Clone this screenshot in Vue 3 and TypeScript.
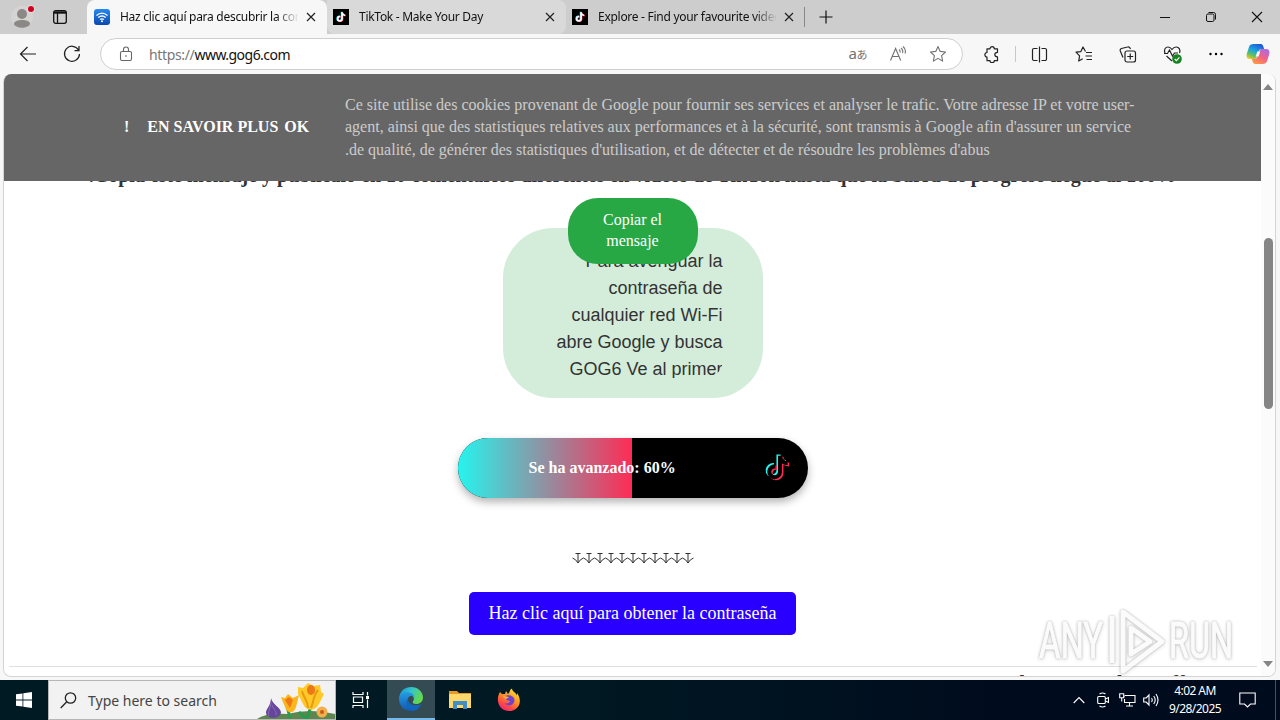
<script setup lang="ts">
interface Tab {
  title: string
  kind: 'wifi' | 'tiktok'
  state: string
}

const tabs: Tab[] = [
  { title: 'Haz clic aquí para descubrir la contraseña', kind: 'wifi', state: 'active' },
  { title: 'TikTok - Make Your Day', kind: 'tiktok', state: 'hovered' },
  { title: 'Explore - Find your favourite videos', kind: 'tiktok', state: 'plain' },
]

const note = 'M16.6 5.8A4.3 4.3 0 0 1 15.5 3h-3.1v12.4a2.6 2.6 0 1 1-1.9-2.5V9.7a5.7 5.7 0 1 0 5 5.7V9a7.300 7.300 0 0 0 4.300 1.400V7.300s-1.900.1-3.200-1.500z'
const messageLines = ['Para averiguar la', 'contraseña de', 'cualquier red Wi-Fi', 'abre Google y busca', 'GOG6 Ve al primer']
const progress = 60
const arrows = Array.from({ length: 11 }, (_, i) => i)
</script>

<template>
  <div class="desktop">
    <header class="titlebar">
      <div class="profile">
        <svg width="36" height="34" viewBox="0 0 36 34">
          <circle cx="22" cy="17" r="11" fill="#d6d4d2" />
          <circle cx="22" cy="14" r="5" fill="#8c8885" />
          <path d="M14 24c0-3 4-4 8-4s8 1 8 4c-2 5-14 5-16 0z" fill="#8c8885" />
          <circle cx="31" cy="9" r="4" fill="#ddd" />
          <circle cx="31" cy="9" r="3" fill="#d2001f" />
        </svg>
        <svg class="workspace" width="14" height="14" viewBox="0 0 14 14" fill="none" stroke="#111" stroke-width="1.300">
          <rect x=".7" y=".7" width="12.600" height="12.600" rx="2" />
          <path d="M1 2.500h12" stroke-width="2.400" />
          <path d="M4.500 3v10" />
        </svg>
      </div>
      <div v-for="tab in tabs" :key="tab.title" class="tab" :class="tab.state">
        <svg v-if="tab.kind === 'wifi'" width="16" height="16" viewBox="0 0 16 16">
          <defs><linearGradient id="wf" x2="0" y2="1"><stop stop-color="#258af0" /><stop offset="1" stop-color="#0b48ad" /></linearGradient></defs>
          <rect width="16" height="16" rx="3" fill="url(#wf)" />
          <g fill="none" stroke="#fff" stroke-width="1.300"><path d="M2.500 6.500q5.500-4.800 11 0M4.300 8.600q3.700-3.200 7.400 0M6.100 10.600q1.900-1.600 3.800 0" /></g>
          <circle cx="8" cy="12.200" r="1" fill="#fff" />
        </svg>
        <svg v-else width="16" height="16" viewBox="0 0 16 16">
          <rect width="16" height="16" fill="#000" />
          <g transform="translate(1.700 1.600) scale(.53)">
            <path :d="note" fill="#25f4ee" transform="translate(-1 -.6)" />
            <path :d="note" fill="#fe2c55" transform="translate(1 .6)" />
            <path :d="note" fill="#fff" />
          </g>
        </svg>
        <span class="tab-title">{{ tab.title }}</span>
        <svg class="close" width="10" height="10" viewBox="0 0 10 10"><path d="M1 1l8 8M9 1l-8 8" stroke="#222" stroke-width="1.200" /></svg>
      </div>
      <div class="new-tab">
        <svg width="14" height="14" viewBox="0 0 14 14"><path d="M7 .5v13M.5 7h13" stroke="#111" stroke-width="1.200" /></svg>
      </div>
      <div class="window-buttons">
        <svg width="12" height="12" viewBox="0 0 12 12"><path d="M1 6.500h10" stroke="#111" /></svg>
        <svg width="12" height="12" viewBox="0 0 12 12" fill="none" stroke="#111"><rect x="1.500" y="3" width="7.500" height="7.500" rx="1.500" /><path d="M3.500 1.500H8.500a2 2 0 0 1 2 2V8.500" /></svg>
        <svg width="12" height="12" viewBox="0 0 12 12"><path d="M1 1l10 10M11 1L1 11" stroke="#111" stroke-width="1.100" /></svg>
      </div>
    </header>

    <div class="toolbar">
      <svg class="back" width="18" height="16" viewBox="0 0 18 16" fill="none" stroke="#222" stroke-width="1.200"><path d="M8.500 1L1.500 8l7 7M1.500 8H17" /></svg>
      <svg class="reload" width="18" height="18" viewBox="0 0 18 18" fill="none" stroke="#222" stroke-width="1.250"><path d="M15.500 5A7.500 7.500 0 1 0 16.500 9M16 1v4.500h-4.500" /></svg>
      <div class="address">
        <svg class="lock" width="14" height="16" viewBox="0 0 14 16" fill="none" stroke="#666" stroke-width="1.100"><rect x="1.500" y="5.500" width="11" height="9" rx="1.500" /><path d="M4.500 5V3.500a2.500 2.500 0 0 1 5 0V5" /><circle cx="7" cy="10" r=".8" fill="#555" stroke="none" /></svg>
        <span class="url"><span class="scheme">https://</span>www.gog6.com</span>
        <span class="translate">a<span class="kana">あ</span></span>
        <svg class="read" width="18" height="18" viewBox="0 0 18 18" fill="none" stroke="#727272" stroke-width="1.100"><path d="M1.500 15.500L6.600 3.500l5.100 12M3.300 11.500h6.600M10 4.500q1.600 1.300 1 3M12 3q2.500 2 1.500 5M14 1.500q3.500 3 2 7" /></svg>
        <svg class="star" width="18" height="18" viewBox="0 0 18 18" fill="none" stroke="#727272" stroke-width="1.100" stroke-linejoin="round"><path d="M9 1.500l2.200 4.900 5.300.6-3.900 3.700 1 5.400L9 13.400l-4.600 2.700 1-5.400L1.500 7l5.300-.6z" /></svg>
      </div>
      <svg class="puzzle" width="16" height="17" viewBox="0 0 16 17" fill="none" stroke="#222" stroke-width="1.200" stroke-linejoin="round"><path d="M3 2.800h3C6 0 10.300 0 10.300 2.800h3.200v3.500c-3.600 0-3.600 4.600 0 4.600v3.800h-3.200c0 2.600-4.300 2.600-4.300 0H3v-3.700C.2 11 .2 6.500 3 6.500z" /></svg>
      <span class="divider"></span>
      <svg class="split" width="17" height="17" viewBox="0 0 17 17" fill="none" stroke="#222" stroke-width="1.200"><path d="M6.500 2.500H3a1.500 1.500 0 0 0-1.500 1.500v9A1.500 1.500 0 0 0 3 14.500h3.500M10.500 2.500H14a1.500 1.500 0 0 1 1.500 1.500v9a1.500 1.500 0 0 1-1.500 1.500h-3.500M8.500.5v16" /></svg>
      <svg class="favorites" width="18" height="17" viewBox="0 0 18 17" fill="none" stroke="#222" stroke-width="1.200" stroke-linejoin="round"><path d="M10.500 5.500L8 1 5.900 5.600 1 6.200l3.600 3.600L3.700 15l4-2.200M11 6.500h6M10.500 10h6.500M11.500 13.500h5.500" /></svg>
      <svg class="collections" width="18" height="17" viewBox="0 0 18 17" fill="none" stroke="#222" stroke-width="1.200"><path d="M4 11.500L1.300 5A2 2 0 0 1 2.500 2.500L8.500 1a2 2 0 0 1 2.500 1l.5 1" /><rect x="6" y="5" width="10.500" height="11" rx="2" /><path d="M11.250 7.500v6M8.250 10.500h6" /></svg>
      <svg class="health" width="20" height="19" viewBox="0 0 20 19" fill="none" stroke="#222" stroke-width="1.150"><path d="M2 8C.5 4.500 2.500 2 5 2c2 0 3 1 4 2.500C10 3 11.200 2 13.200 2c3 0 4.500 3 3.300 6M1 8.500h3.500l2-3.500 3 6 2-3h3.500M3.500 11L9 16" /><circle cx="14" cy="14" r="4.800" fill="#168321" stroke="none" /><path d="M11.700 14l1.700 1.700 3-3.300" stroke="#fff" /></svg>
      <svg class="more" width="14" height="4" viewBox="0 0 14 4"><circle cx="1.500" cy="2" r="1.200" /><circle cx="7" cy="2" r="1.200" /><circle cx="12.500" cy="2" r="1.200" /></svg>
      <svg class="copilot" width="24" height="22" viewBox="0 0 24 22">
        <defs>
          <linearGradient id="cpa" x1=".7" y1="0" x2=".2" y2="1"><stop stop-color="#2057d8" /><stop offset=".45" stop-color="#18a5e0" /><stop offset=".75" stop-color="#65c05e" /><stop offset="1" stop-color="#f0ca20" /></linearGradient>
          <linearGradient id="cpb" x1=".8" y1="0" x2=".2" y2="1"><stop stop-color="#a96be8" /><stop offset=".5" stop-color="#f26287" /><stop offset="1" stop-color="#ff9a3d" /></linearGradient>
        </defs>
        <path d="M7.500 1h7.300c1.700 0 2.200 1.400 2.700 3l.6 2h-2.300c-2 0-2.800 1-3.300 2.800L10.700 14c-.5 1.500-1.300 2-3 2H4C.8 16-.2 13.700 1 10l2-6c.8-2.200 2-3 4.500-3z" fill="url(#cpa)" />
        <path d="M16.500 21H9.200c-1.700 0-2.200-1.400-2.700-3L6 16h2.200c2 0 2.800-1 3.300-2.800L13.300 8c.5-1.500 1.300-2 3-2H20c3.200 0 4.200 2.300 3 6l-2 6c-.8 2.200-2 3-4.500 3z" fill="url(#cpb)" />
        <path d="M11.300 8.500h3l-1.700 5h-3z" fill="#fff" opacity=".9" />
      </svg>
    </div>

    <div class="page-frame">
      <main class="page">
        <section class="cookie-banner">
          <div class="cookie-actions"><span>!</span><span class="learn">EN SAVOIR PLUS</span><span class="ok">OK</span></div>
          <p class="cookie-text">
            <span>Ce site utilise des cookies provenant de Google pour fournir ses services et analyser le trafic. Votre adresse IP et votre user-</span>
            <span>agent, ainsi que des statistiques relatives aux performances et à la sécurité, sont transmis à Google afin d'assurer un service</span>
            <span>.de qualité, de générer des statistiques d'utilisation, et de détecter et de résoudre les problèmes d'abus</span>
          </p>
        </section>
        <h2 class="instruction">.Copia este mensaje y publícalo en 10 comentarios diferentes en videos de TikTok hasta que la barra de progreso llegue al 100%</h2>
        <section class="message">
          <button class="copy">Copiar el<br />mensaje</button>
          <div class="message-text"><div v-for="line in messageLines" :key="line">{{ line }}</div></div>
        </section>
        <section class="progress">
          <div class="progress-fill"></div>
          <span class="progress-label">Se ha avanzado: {{ progress }}%</span>
          <svg class="progress-logo" width="30" height="32" viewBox="0 0 30 32">
            <g transform="translate(0 -1) scale(1.300)">
              <path :d="note" fill="#25f4ee" transform="translate(-1.300 -.4)" />
              <path :d="note" fill="#fe2c55" transform="translate(1 1.500)" />
              <path :d="note" fill="#000" transform="translate(-.1 .6)" />
            </g>
          </svg>
        </section>
        <svg class="arrows" width="122" height="13" viewBox="0 0 122 13" fill="none" stroke="#333">
          <path v-for="i in arrows" :key="i" :d="`M${i * 11 + 3.500} 1.500h5M${i * 11 + 6} 1.500v9.500M${i * 11 + 0.500} 6q3.500 1.200 5.500 5q2-3.800 5.500-5`" />
        </svg>
        <button class="get-password">Haz clic aquí para obtener la contraseña</button>
        <hr />
        <h3 class="next-heading">Google ver Google en off</h3>
      </main>
      <div class="scrollbar">
        <svg width="10" height="6" viewBox="0 0 10 6"><path d="M0 6l5-6 5 6z" fill="#858585" /></svg>
        <i class="thumb"></i>
        <svg width="10" height="6" viewBox="0 0 10 6"><path d="M0 0l5 6 5-6z" fill="#858585" /></svg>
      </div>
    </div>

    <svg class="watermark" width="210" height="72" viewBox="0 0 210 72">
      <g class="mark-text">
        <text x="8" y="53" textLength="64" lengthAdjust="spacingAndGlyphs">ANY</text>
        <text x="138" y="53" textLength="64" lengthAdjust="spacingAndGlyphs">RUN</text>
      </g>
      <g class="mark-shape">
        <path d="M92 66V7l39 29.500z" /><path d="M100 49V23l19 13.500z" /><path d="M81 11v47" />
      </g>
    </svg>

    <footer class="taskbar">
      <div class="start">
        <svg width="16" height="16" viewBox="0 0 16 16" fill="#fff"><path d="M0 2.300L6.500 1.400v6.200H0zM7.300 1.300L16 0v7.600H7.300zM0 8.400h6.500v6.200L0 13.700zM7.300 8.400H16V16l-8.700-1.300z" /></svg>
      </div>
      <div class="search">
        <svg class="lens" width="17" height="17" viewBox="0 0 17 17" fill="none" stroke="#222" stroke-width="1.300"><circle cx="10.500" cy="6" r="5.200" /><path d="M6.800 9.800L.7 16" /></svg>
        <span>Type here to search</span>
        <svg class="flowers" width="78" height="38" viewBox="0 0 78 38">
          <path d="M0 38q8-6 30-5q24-6 48 0v5z" fill="#5d874e" />
          <path d="M33 37L30 25M50 38l4-13M49 38l-7-7" stroke="#2c9a4c" stroke-width="3" fill="none" />
          <path d="M14 17c1 6 9 9 10 14c0 7-14 8-15 1c0-5 5-7 5-15z" fill="#65469a" />
          <path d="M14 20c0 7-4 11-2 15M15 24c2 5 5 6 4 10" stroke="#8c6dbb" fill="none" />
          <path d="M24 16l4 1 3-4 5 4 6-3-3 12c-2 7-9 7-11 0z" fill="#fbb51e" />
          <path d="M28 19l4-3 4 3-3 8z" fill="#ef7816" />
          <path d="M41 6l5 1 5-5 5 3 7-1 1 7 3 2-5 10c-4 8-13 7-16 0l-5-10z" fill="#ffc928" />
          <path d="M45 10c2 8 6 9 6 17M61 9c-5 6-4 11-7 18" stroke="#e99a12" stroke-width="2" fill="none" />
          <ellipse cx="54" cy="9" rx="4" ry="5" fill="#ee7716" />
          <circle cx="65" cy="31" r="5.500" fill="#f3ae4d" /><circle cx="65" cy="31" r="2" fill="#c85b17" />
        </svg>
      </div>
      <div class="task">
        <svg width="18" height="16" viewBox="0 0 18 16" fill="none" stroke="#fff" stroke-width="1.200"><path d="M1 0v2.500h10V0M1 16v-2.500h10V16M1.500 5h9v5.500h-9zM15.500 0v3.500M15.500 7.500V16" /><path d="M14 4h3v3h-3z" fill="#fff" stroke="none" /></svg>
      </div>
      <div class="task open">
        <svg width="26" height="26" viewBox="0 0 26 26">
          <defs>
            <linearGradient id="eg" x2="1" y2=".4"><stop stop-color="#168fd5" /><stop offset=".5" stop-color="#35c4cb" /><stop offset="1" stop-color="#62d94e" /></linearGradient>
            <linearGradient id="eb" x2="0" y2="1"><stop stop-color="#259de5" /><stop offset="1" stop-color="#1258ae" /></linearGradient>
          </defs>
          <path d="M1.300 11C2.500 4.500 7 1 13 1c7 0 12 5 12 10.500c0 4-3 6.500-6.800 6.500c-3.200 0-4.200-1.300-3.200-2.700c2.500-3.500-.5-6.300-4-6.300C6 9 1 12 1.300 11z" fill="url(#eg)" />
          <path d="M1 13c0-4 3.500-7 8-7c4 0 7 2.500 7.500 5c-2-2-5.500-2-6.500 1.500c-1 5 5 9 13 6C20.500 23 17 25 13 25C6 25 1 20 1 13z" fill="url(#eb)" />
          <path d="M10 12.500c-4 4-1 11 5 12.300c4-.6 6.600-3 8-6.300c-7 3-14-1-13-6z" fill="#1067bd" />
        </svg>
      </div>
      <div class="task">
        <svg width="22" height="20" viewBox="0 0 22 20"><path d="M0 1h8l2 2h12v4H0z" fill="#e49b25" /><path d="M0 4h22v14H0z" fill="#ffd76b" /><path d="M4 19V11h14v8h-4v-4H8v4z" fill="#3e8fc9" /></svg>
      </div>
      <div class="task">
        <svg width="24" height="24" viewBox="0 0 24 24">
          <defs><linearGradient id="ff" x1=".8" y1="0" x2=".2" y2="1"><stop stop-color="#ffe52e" /><stop offset=".4" stop-color="#ff9a24" /><stop offset=".75" stop-color="#ff4549" /><stop offset="1" stop-color="#e9217c" /></linearGradient></defs>
          <path d="M3 4l2 2c1 0 2-.2 3 0L9 3l2 3c2-1 1-4 4-5.500c0 3 4 4 5 7V5c6 8 2 18-8 18C2 23-2 12 3 4z" fill="url(#ff)" />
          <path d="M7 9c3-3 10-2 10.500 3c0 6-8 7-10 3c2 1 5 0 5.500-2c-1.500 0-4-.5-6-4z" fill="#7142ca" /><path d="M6 8c2 0 4 0 6 1.500c-1 1-3 .5-3 2.500z" fill="#ffae2b" />
        </svg>
      </div>
      <div class="tray">
        <svg class="chev" width="12" height="8" viewBox="0 0 12 8"><path d="M.7 7L6 1.500 11.300 7" /></svg>
        <svg class="meet" width="12" height="16" viewBox="0 0 12 16"><rect x=".7" y="4.500" width="7.600" height="7" rx="1" /><path d="M8.500 7l3-1.500v5L8.500 9M2.500 2q3-2 6 0M2.500 14q3 2 6 0" /></svg>
        <svg class="net" width="17" height="14" viewBox="0 0 17 14"><path d="M6 2.500h10v7H5.500V6M10.500 9.500V13M7 13h7M.7.700h4v4h-4zM2.700 5v3.500M5 3h1" /></svg>
        <svg class="sound" width="17" height="14" viewBox="0 0 17 14"><path d="M.7 5h2.500L6 2v10L3.200 9H.7zM8.500 5q1.500 2 0 4M10.700 3q3 4 0 8M13 1q4 6 0 12" /></svg>
        <div class="clock"><span>4:02 AM</span><span>9/28/2025</span></div>
        <svg class="notice" width="17" height="16" viewBox="0 0 17 16"><path d="M.8 1h15.400v11H11.500L8.500 15 5.500 12H.8z" /></svg>
        <i class="peek"></i>
      </div>
    </footer>
  </div>
</template>

<style>
body { margin: 0; overflow: hidden; }
</style>

<style scoped>
* { box-sizing: border-box; }
svg { display: block; flex: none; }
button { border: 0; padding: 0; }
.desktop { position: relative; width: 1280px; height: 720px; overflow: hidden; display: flex; flex-direction: column; background: #f7f7f7; font-family: "Noto Sans", "Open Sans", sans-serif; }
.titlebar { height: 34px; flex: none; display: flex; background: #cdcdcd; }
.profile { width: 87px; display: flex; }
.workspace { margin: 10px 0 0 17px; }
.tab { width: 239px; height: 34px; padding: 0 11px 0 7px; display: flex; align-items: center; font-size: 12px; color: #111; white-space: nowrap; border-radius: 8px 8px 0 0; }
.tab.active { width: 240px; background: #f7f7f7; }
.tab.hovered { background: #d9d9d9; padding-left: 6px; border-radius: 0 8px 8px 8px; }
.tab.plain { padding-left: 6px; }
.tab-title { width: 178px; margin: -1px 0 0 10px; overflow: hidden; letter-spacing: -.28px; -webkit-mask-image: linear-gradient(90deg, #000 156px, transparent 179px); mask-image: linear-gradient(90deg, #000 156px, transparent 179px); }
.close { margin-left: auto; }
.new-tab { align-self: center; height: 20px; margin-left: -1px; padding: 3px 0 0 14px; border-left: 1px solid #888; }
.window-buttons { margin-left: auto; padding-right: 17px; display: flex; align-items: center; gap: 34px; }
.toolbar { height: 40px; flex: none; display: flex; align-items: center; background: #f7f7f7; }
.back { margin-left: 19px; }
.reload { margin-left: 26px; }
.address { width: 863px; height: 32px; margin-left: 19px; display: flex; align-items: center; border: 1px solid #cfcfcf; border-radius: 16px; background: #fff; }
.lock { margin-left: 18px; }
.url { margin-left: 16px; font-size: 14px; color: #111; letter-spacing: -.53px; }
.scheme { color: #777; letter-spacing: -.35px; }
.translate { margin-left: auto; display: flex; align-items: center; color: #727272; font-size: 15px; line-height: 20px; letter-spacing: -.5px; margin-top: -2px; }
.kana { margin-top: 1px; font-family: "Noto Sans CJK JP", sans-serif; font-size: 11px; }
.read { margin-left: 22px; }
.star { margin: 0 15px 0 22px; }
.puzzle { margin-left: 21px; }
.divider { width: 1px; height: 16px; margin-left: 15px; background: #c8c8c8; }
.split { margin-left: 15px; }
.favorites { margin-left: 27px; }
.collections { margin-left: 26px; }
.health { margin-left: 26px; }
.more { margin-left: 26px; }
.copilot { margin-left: 23px; }
.page-frame { width: 1273px; height: 603px; flex: none; margin-left: 3px; display: flex; overflow: hidden; border: 1px solid #d4d4d4; border-top: 0; border-radius: 8px; background: #fff; }
.page { position: relative; width: 1257px; flex: none; display: flex; flex-direction: column; align-items: center; color: #333; font-family: "Liberation Serif", serif; }
.cookie-banner { position: absolute; inset: 0 0 auto; z-index: 3; height: 107px; display: flex; padding: 20px 0 0 120px; background: #666; color: #ccc; font-size: 16px; }
.cookie-actions { width: 221px; display: flex; padding-top: 24px; line-height: 18px; color: #fff; font-weight: 700; white-space: nowrap; }
.learn { margin-left: 18px; }
.ok { margin-left: 6px; }
.cookie-text { margin: 0; display: flex; flex-direction: column; line-height: 22.400px; white-space: nowrap; }
.instruction { height: 30px; margin: 86px 0 0; flex: none; line-height: 30px; font-size: 20px; white-space: nowrap; }
.message { position: relative; width: 260px; height: 170px; flex: none; margin-top: 38px; border-radius: 50px; background: #d4edda; }
.copy { position: absolute; left: 65px; top: -30px; z-index: 1; width: 130px; height: 66px; padding-bottom: 2px; border-radius: 30px; color: #fff; background: #28a745; font: 16px/21px "Liberation Serif", serif; }
.message-text { height: 150px; margin-right: 40px; padding-top: 20px; overflow: hidden; border-radius: 0 0 18px 0; text-align: right; font: 18px/27px "Liberation Sans", sans-serif; }
.progress { position: relative; width: 350px; height: 60px; margin-top: 40px; flex: none; border-radius: 30px; overflow: hidden; display: flex; align-items: center; background: #000; box-shadow: 0 4px 8px rgba(0,0,0,.3); }
.progress-fill { width: 174px; height: 60px; background: linear-gradient(90deg, #25f4ee, #fe2c55); }
.progress-label { position: absolute; left: 71px; top: 20px; line-height: 20px; color: #fff; font-size: 16px; font-weight: 700; white-space: nowrap; }
.progress-logo { margin-left: 130px; }
.arrows { flex: none; margin-top: 54px; }
.get-password { width: 327px; height: 43px; flex: none; margin-top: 27px; border-radius: 5px; background: #2900ff; color: #fff; font: 18px "Liberation Serif", serif; white-space: nowrap; }
hr { width: 1248px; margin: 31px 0 0; border: 0; border-top: 1px solid #e0e0e0; flex: none; }
.next-heading { width: 287px; align-self: flex-end; flex: none; margin: 4px 0 0; font-size: 20px; line-height: 24px; white-space: nowrap; }
.scrollbar { width: 15px; padding: 10px 0 9px; display: flex; flex-direction: column; align-items: center; background: #fbfbfb; }
.thumb { width: 9px; height: 171px; margin: 148px 0 auto; flex: none; border-radius: 5px; background: #858585; }
.watermark { position: absolute; left: 1031px; top: 605px; z-index: 4; filter: drop-shadow(0 0 1px rgba(0,0,0,.4)) drop-shadow(0 1px 2px rgba(0,0,0,.2)); opacity: .65; }
.mark-text { font: 50px Roboto, sans-serif; fill: #fafafa; stroke: #fafafa; }
.mark-shape { fill: none; stroke: #fafafa; stroke-width: 5; stroke-linejoin: round; }
.taskbar { height: 40px; flex: none; margin-top: auto; display: flex; background: linear-gradient(90deg, #001a24 0, #001923 45%, #000b1d 80%, #000b1d); }
.start { width: 48px; display: grid; place-items: center; }
.search { width: 288px; display: flex; align-items: center; border: 1px solid #b6b6b6; background: #f2f2f2; color: #444; font-size: 14px; white-space: nowrap; overflow: hidden; }
.lens { margin: 0 11px; }
.flowers { margin-left: auto; align-self: flex-end; }
.task { width: 49px; display: grid; place-items: center; }
.task.open { width: 48px; margin-left: 2px; background: #344b54; border-bottom: 2px solid #76b9ed; }
.tray { margin-left: auto; height: 40px; width: 207px; display: flex; align-items: center; color: #fff; font-size: 12px; }
.tray svg { fill: none; stroke: #fff; stroke-width: 1.100; }
.tray .meet { margin-left: 12px; }
.tray .net { margin-left: 10px; }
.tray .sound { margin-left: 7px; }
.clock { width: 52px; margin-left: 9px; display: flex; flex-direction: column; align-items: center; line-height: 18px; letter-spacing: -.55px; white-space: nowrap; }
.tray .notice { margin-left: 18px; }
.peek { width: 1px; height: 40px; margin-left: auto; margin-right: 4px; background: #46505e; }
</style>
